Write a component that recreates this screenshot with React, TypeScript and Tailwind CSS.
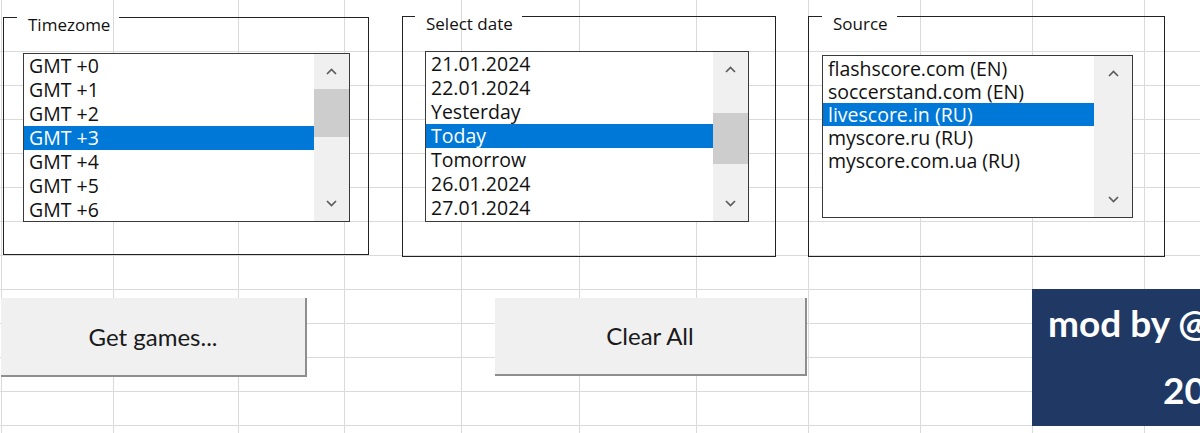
import React from 'react';

// Excel-like sheet with form controls floating over the cell grid

const colClasses = [
  'w-[2px]', 'w-[112px]', 'w-[125px]', 'w-[106px]', 'w-[117px]', 'w-[118px]',
  'w-[117px]', 'w-[112px]', 'w-[112px]', 'w-[112px]', 'w-[112px]',
];

function SheetGrid() {
  return (
    <>
      <div className="absolute inset-0 flex">
        {colClasses.map((w, i) => (
          <div key={i} className={`${w} h-full shrink-0 border-r border-[#dadada]`} />
        ))}
        <div className="flex-1" />
      </div>
      <div className="absolute inset-0 flex flex-col">
        <div className="h-[52px] shrink-0 border-b border-[#dadada]" />
        {Array.from({ length: 11 }).map((_, i) => (
          <div key={i} className="h-[34px] shrink-0 border-b border-[#dadada]" />
        ))}
      </div>
    </>
  );
}

function Chevron({ up }: { up?: boolean }) {
  return (
    <svg width="11" height="7" viewBox="0 0 11 7">
      <polyline
        points={up ? '1,6 5.5,1.5 10,6' : '1,1 5.5,5.5 10,1'}
        fill="none"
        stroke="#5c5c5c"
        strokeWidth="1.7"
      />
    </svg>
  );
}

type ListProps = {
  items: string[];
  selected: number;
  box: string; // size + margins
  rowClass: string;
  listPad: string;
  barWidth: string;
  thumb?: string;
};

function ListBox({ items, selected, box, rowClass, listPad, barWidth, thumb }: ListProps) {
  return (
    <div className={`flex border border-[#3a3a3a] bg-white ${box}`}>
      <div className={`flex-1 flex flex-col ${listPad}`}>
        {items.map((item, i) => (
          <div
            key={item}
            className={`${rowClass} pl-[5px] whitespace-nowrap ${
              i === selected ? 'bg-[#0078d7] text-white' : 'text-[#111]'
            }`}
          >
            {item}
          </div>
        ))}
      </div>
      <div className={`${barWidth} bg-[#f0f0f0] flex flex-col`}>
        <div className="h-[35px] flex items-center justify-center">
          <Chevron up />
        </div>
        <div className="flex-1">{thumb && <div className={`${thumb} bg-[#cdcdcd]`} />}</div>
        <div className="h-[35px] flex items-center justify-center">
          <Chevron />
        </div>
      </div>
    </div>
  );
}

function GroupFrame({
  label,
  frame,
  edge,
  children,
}: {
  label: string;
  frame: string;
  edge: string;
  children: React.ReactNode;
}) {
  return (
    <div className={`flex flex-col shrink-0 ${frame}`}>
      <div className="flex">
        <div className={`${edge} border-l border-t border-[#222]`} />
        <span className="pl-[11px] pr-[9px] text-[17px] leading-[16px] text-[#111]">{label}</span>
        <div className="flex-1 border-r border-t border-[#222]" />
      </div>
      <div className="flex-1 border-l border-r border-b border-[#222]">{children}</div>
    </div>
  );
}

export default function App() {
  return (
    <div
      className="relative w-[1200px] h-[433px] overflow-hidden bg-white"
      style={{ fontFamily: '"Open Sans", "Noto Sans", sans-serif' }}
    >
      <SheetGrid />

      <div className="relative flex flex-col">
        {/* Group boxes */}
        <div className="flex items-start pt-[16px]">
          <GroupFrame label="Timezome" frame="ml-[3px] mt-[1px] w-[366px] h-[238px]" edge="w-[14px]">
            <ListBox
              box="ml-[19px] mt-[20px] w-[327px] h-[169px]"
              listPad="pt-0"
              rowClass="h-[24px] leading-[24px] text-[19.5px]"
              barWidth="w-[35px]"
              thumb="h-[48px]"
              selected={3}
              items={['GMT +0', 'GMT +1', 'GMT +2', 'GMT +3', 'GMT +4', 'GMT +5', 'GMT +6']}
            />
          </GroupFrame>

          <GroupFrame label="Select date" frame="ml-[33px] w-[374px] h-[241px]" edge="w-[13px]">
            <ListBox
              box="ml-[22px] mt-[19px] w-[324px] h-[171px]"
              listPad="pt-0"
              rowClass="h-[24px] leading-[24px] text-[19.5px]"
              barWidth="w-[35px]"
              thumb="mt-[26px] h-[51px]"
              selected={3}
              items={[
                '21.01.2024',
                '22.01.2024',
                'Yesterday',
                'Today',
                'Tomorrow',
                '26.01.2024',
                '27.01.2024',
              ]}
            />
          </GroupFrame>

          <GroupFrame label="Source" frame="ml-[32px] w-[357px] h-[241px]" edge="w-[14px]">
            <ListBox
              box="ml-[13px] mt-[23px] w-[311px] h-[163px]"
              listPad="pt-[1px]"
              rowClass="h-[23px] leading-[23px] text-[19.5px]"
              barWidth="w-[38px]"
              selected={2}
              items={[
                'flashscore.com (EN)',
                'soccerstand.com (EN)',
                'livescore.in (RU)',
                'myscore.ru (RU)',
                'myscore.com.ua (RU)',
              ]}
            />
          </GroupFrame>
        </div>

        {/* Buttons + credit */}
        <div className="flex items-start mt-[32px]">
          <button
            className="ml-[1px] mt-[9px] w-[306px] h-[79px] shrink-0 bg-[#f0f0f0] border-r-2 border-b-2 border-[#8e8e8e] text-[24px] text-[#1a1a1a]"
            style={{ fontFamily: 'Lato, "Liberation Sans", sans-serif' }}
          >
            Get games...
          </button>
          <button
            className="ml-[188px] mt-[9px] w-[312px] h-[78px] shrink-0 bg-[#f0f0f0] border-r-2 border-b-2 border-[#8e8e8e] text-[24px] text-[#1a1a1a]"
            style={{ fontFamily: 'Lato, "Liberation Sans", sans-serif' }}
          >
            Clear All
          </button>
          <div
            className="ml-[225px] w-[168px] h-[137px] shrink-0 bg-[#203864] text-white font-bold text-[37px] leading-[36px] whitespace-nowrap overflow-hidden flex flex-col"
            style={{ fontFamily: 'Lato, "Liberation Sans", sans-serif' }}
          >
            <span className="pl-[16px] pt-[16px]">mod by @</span>
            <span className="pl-[131px] mt-[31px]">20</span>
          </div>
        </div>
      </div>
    </div>
  );
}
